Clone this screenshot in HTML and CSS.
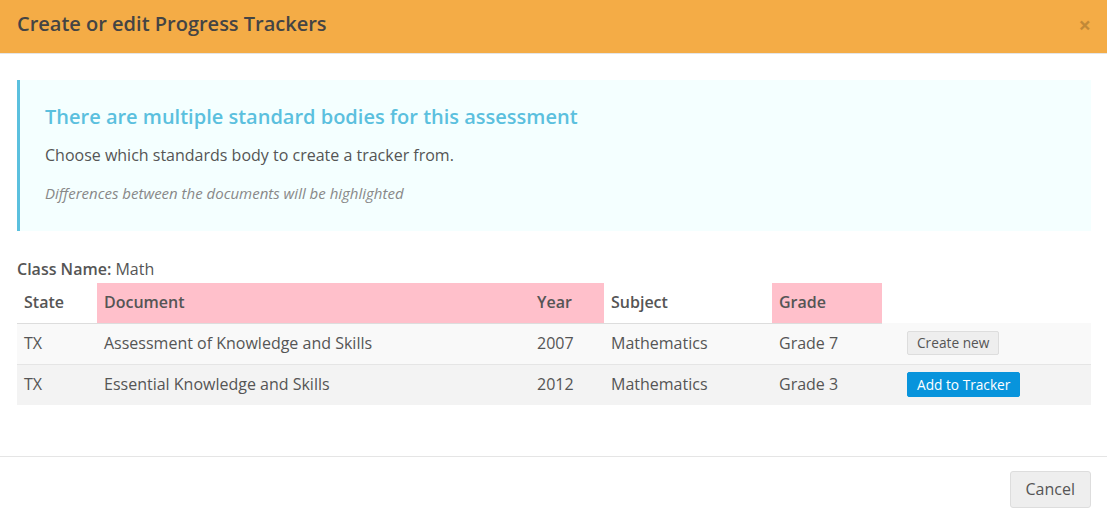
FILE: index.html
```html
<!DOCTYPE html>
<html>
<head>
<meta charset="utf-8">
<link rel="stylesheet" href="styles.css">
</head>
<body>
<div class="modal">
  <div class="modal-header">
    <h4 class="modal-title">Create or edit Progress Trackers</h4>
    <span class="close">×</span>
  </div>
  <div class="modal-body">
    <div class="callout">
      <h4 class="callout-title">There are multiple standard bodies for this assessment</h4>
      <p class="callout-text">Choose which standards body to create a tracker from.</p>
      <p class="callout-note">Differences between the documents will be highlighted</p>
    </div>
    <div class="class-name"><strong>Class Name:</strong> Math</div>
    <table class="trackers">
      <colgroup>
        <col class="c-state"><col class="c-doc"><col class="c-year"><col class="c-subject"><col class="c-grade"><col class="c-action">
      </colgroup>
      <thead>
        <tr>
          <th>State</th>
          <th class="diff">Document</th>
          <th class="diff">Year</th>
          <th>Subject</th>
          <th class="diff">Grade</th>
          <th class="blank"></th>
        </tr>
      </thead>
      <tbody>
        <tr>
          <td>TX</td>
          <td>Assessment of Knowledge and Skills</td>
          <td>2007</td>
          <td>Mathematics</td>
          <td>Grade 7</td>
          <td class="action"><button class="btn btn-default">Create new</button></td>
        </tr>
        <tr>
          <td>TX</td>
          <td>Essential Knowledge and Skills</td>
          <td>2012</td>
          <td>Mathematics</td>
          <td>Grade 3</td>
          <td class="action"><button class="btn btn-primary">Add to Tracker</button></td>
        </tr>
      </tbody>
    </table>
  </div>
  <div class="modal-footer">
    <button class="btn btn-cancel">Cancel</button>
  </div>
</div>
</body>
</html>
```

FILE: styles.css
```css
* { box-sizing: border-box; }
html, body {
  margin: 0;
  padding: 0;
  background: #fff;
  font-family: "Open Sans", "Liberation Sans", sans-serif;
  color: #555;
}
.modal {
  width: 1107px;
  height: 511px;
  overflow: hidden;
}
.modal-header {
  height: 54px;
  padding: 0 17px 5px;
  background: #f4ac46;
  border-bottom: 1px solid #e5e5e5;
  display: flex;
  align-items: center;
  justify-content: space-between;
}
.modal-title {
  margin: 0;
  font-size: 20px;
  font-weight: 600;
  color: #444;
  line-height: 28px;
}
.close {
  font-size: 22px;
  font-weight: 700;
  color: #000;
  opacity: 0.2;
  line-height: 1;
  margin-right: -1px;
  margin-top: 0;
}
.modal-body {
  padding: 26px 16px 0 17px;
}
.callout {
  background: #f4ffff;
  border-left: 3px solid #5bc0de;
  padding: 23px 25px 0 25px;
  height: 151px;
}
.callout-title {
  margin: 0 0 13px;
  font-size: 20px;
  font-weight: 600;
  color: #5bc0de;
  line-height: 28px;
}
.callout-text {
  margin: 0 0 16px;
  font-size: 16px;
  line-height: 22px;
  color: #555;
}
.callout-note {
  margin: 0;
  font-size: 15px;
  line-height: 22px;
  font-style: italic;
  color: #888;
}
.class-name {
  margin: 27px 0 3px;
  font-size: 16px;
  line-height: 22px;
  color: #555;
}
.class-name strong {
  font-weight: 600;
}
.trackers {
  width: 100%;
  border-collapse: collapse;
  font-size: 16px;
  color: #555;
}
.c-state { width: 80px; }
.c-doc { width: 433px; }
.c-year { width: 74px; }
.c-subject { width: 168px; }
.c-grade { width: 110px; }
.trackers th {
  text-align: left;
  font-weight: 600;
  height: 40px;
  padding: 0 7px 2px;
  border-bottom: 1px solid #ddd;
  vertical-align: middle;
}
.trackers th.diff {
  background: #ffc0cb;
}
.trackers th.blank {
  border-bottom-color: transparent;
}
.trackers td {
  height: 41px;
  padding: 0 7px 1px;
  vertical-align: middle;
  border-top: 1px solid #e5e5e5;
}
.trackers td.action {
  padding-left: 25px;
}
.trackers tbody tr:nth-child(1) { background: #f9f9f9; }
.trackers tbody tr:nth-child(2) { background: #f3f3f3; }
.btn {
  font-family: "Open Sans", "Liberation Sans", sans-serif;
  border-radius: 2px;
  cursor: pointer;
}
.btn-default {
  font-size: 13.7px;
  padding: 3px 9px;
  background: #eee;
  border: 1px solid #ddd;
  color: #555;
  line-height: 16px;
}
.btn-primary {
  font-size: 13.7px;
  padding: 4px 9px;
  background: #0894dc;
  border: 1px solid #0894dc;
  color: #fff;
  line-height: 15px;
}
.modal-footer {
  margin-top: 51px;
  border-top: 1px solid #e5e5e5;
  padding: 14px 16px 0;
  display: flex;
  justify-content: flex-end;
}
.btn-cancel {
  font-size: 16px;
  padding: 7px 15px;
  background: #eee;
  border: 1px solid #ddd;
  color: #555;
  border-radius: 3px;
  line-height: 21px;
}
```
